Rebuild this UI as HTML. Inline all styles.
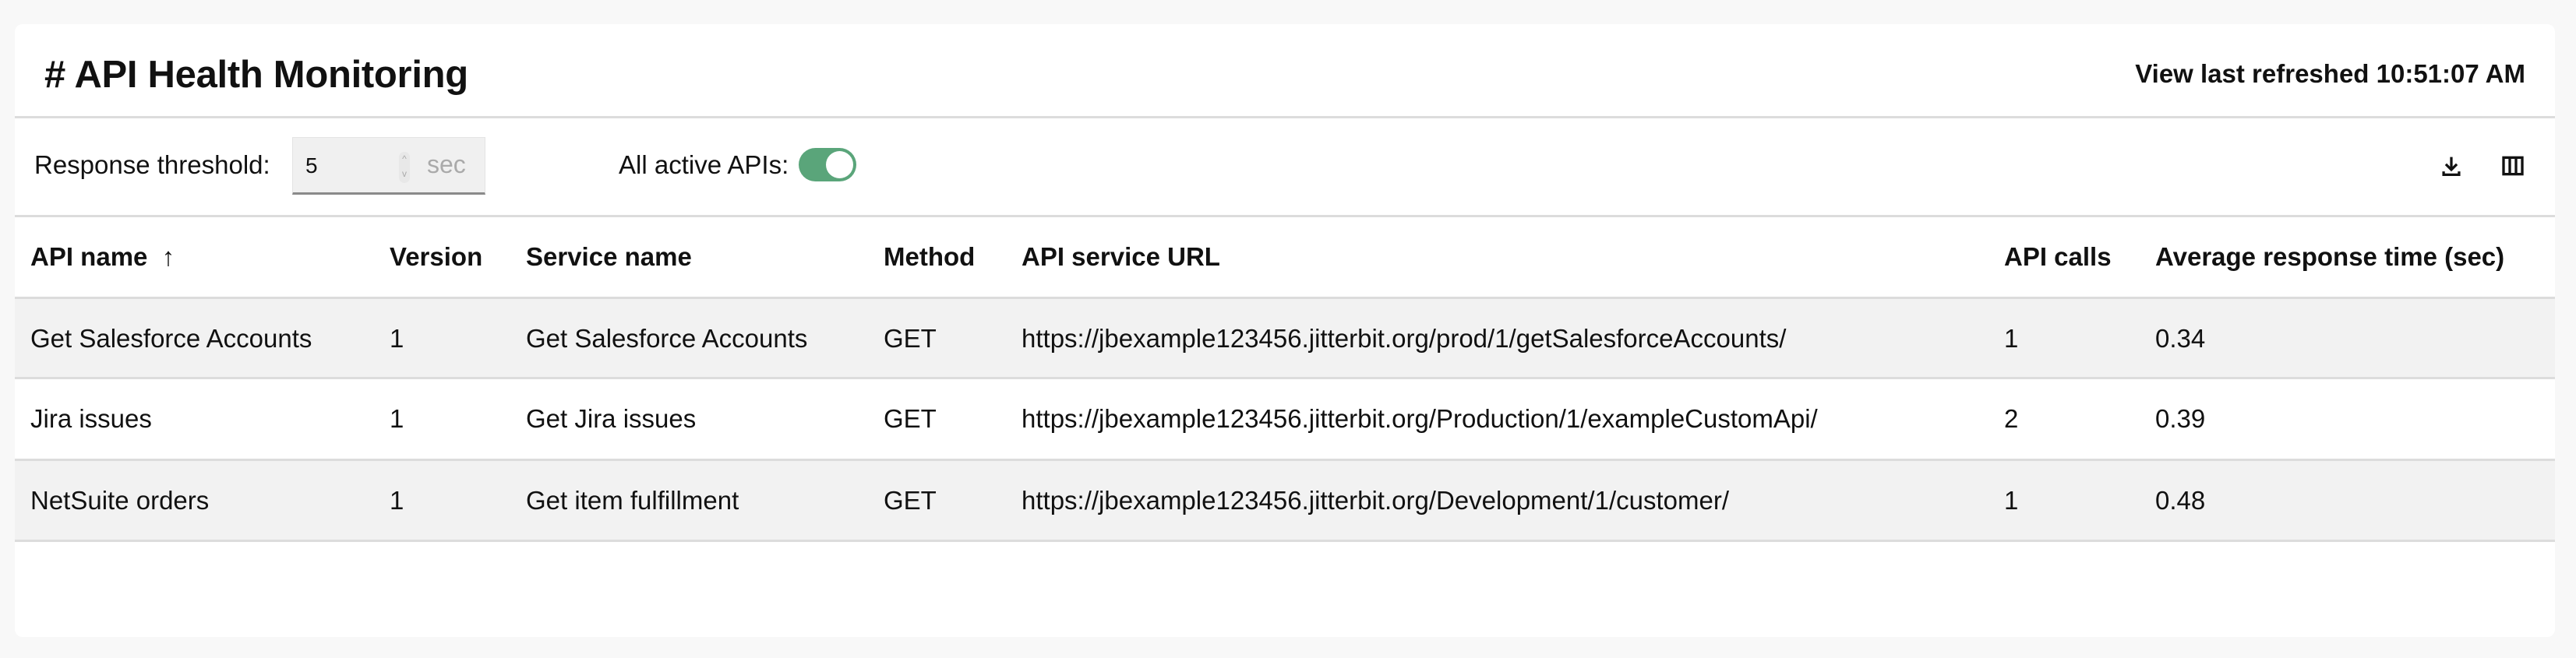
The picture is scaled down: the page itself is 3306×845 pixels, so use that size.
<!DOCTYPE html>
<html><head><meta charset="utf-8"><style>
*{margin:0;padding:0;box-sizing:border-box}
body{width:3306px;height:845px;background:#f8f8f8;font-family:"Liberation Sans",sans-serif;color:#111;position:relative;overflow:hidden}
.card{position:absolute;left:19px;top:31px;width:3260px;height:787px;background:#fff;border-radius:10px}
.abs{position:absolute;white-space:nowrap}
.title{left:38px;top:37px;font-size:49px;font-weight:bold;letter-spacing:-0.3px}
.refr{right:38px;top:45px;font-size:33px;font-weight:bold}
.hr{position:absolute;left:0;right:0;height:3px;background:#dcdcdc}
.lbl{font-size:33px;top:162px}
.inp{left:356px;top:145px;width:248px;height:74px;background:#f0f0f0;border:1px solid #e4e4e4;border-bottom:3px solid #8a8a8a}
.tog{left:1006px;top:159px;width:74px;height:43px;background:#5aa57a;border-radius:22px}
.tog:after{content:"";position:absolute;right:4px;top:4px;width:35px;height:35px;border-radius:50%;background:#fff}
.row{position:absolute;left:0;right:0;height:104px}
.c{position:absolute;font-size:33px;white-space:nowrap}
.h .c{font-weight:bold}
</style></head><body>
<div class="card">
<div class="abs title"># API Health Monitoring</div>
<div class="abs refr">View last refreshed 10:51:07 AM</div>
<div class="hr" style="top:118px"></div>
<div class="abs lbl" style="left:25px">Response threshold:</div>
<div class="abs inp"><span style="position:absolute;left:16px;top:20px;font-size:28px">5</span>
<span style="position:absolute;left:136px;top:18px;width:14px;height:40px;border-radius:7px;background:#e8e8e8;font-size:12px;color:#aaa;text-align:center;line-height:19px">^<br>v</span>
<span style="position:absolute;left:172px;top:16px;font-size:32px;color:#aaa">sec</span></div>
<div class="abs lbl" style="left:775px">All active APIs:</div>
<div class="abs tog"></div>
<svg class="abs" style="left:3110px;top:165px" width="34" height="34" viewBox="0 0 24 24"><path d="M12 4v11M7 10.5l5 5 5-5M5 17v3h14v-3" fill="none" stroke="#111" stroke-width="2.3"/></svg>
<svg class="abs" style="left:3189px;top:166px" width="34" height="32" viewBox="0 0 24 24"><rect x="3" y="4" width="18" height="16" fill="none" stroke="#111" stroke-width="2.5"/><path d="M9 4v16M15 4v16" stroke="#111" stroke-width="2.5"/></svg>
<div class="hr" style="top:245px"></div>
<div class="row h" style="top:250px;height:101px">
<div class="c" style="left:20px;top:30px">API name &nbsp;↑</div>
<div class="c" style="left:481px;top:30px">Version</div>
<div class="c" style="left:656px;top:30px">Service name</div>
<div class="c" style="left:1115px;top:30px">Method</div>
<div class="c" style="left:1292px;top:30px">API service URL</div>
<div class="c" style="left:2553px;top:30px">API calls</div>
<div class="c" style="left:2747px;top:30px">Average response time (sec)</div>
</div>
<div class="hr" style="top:350px;background:#dcdcdc"></div>
<div class="row" style="top:353px;background:#f2f2f2;height:101px">
<div class="c" style="left:20px;top:32px">Get Salesforce Accounts</div><div class="c" style="left:481px;top:32px">1</div><div class="c" style="left:656px;top:32px">Get Salesforce Accounts</div><div class="c" style="left:1115px;top:32px">GET</div><div class="c" style="left:1292px;top:32px">https://jbexample123456.jitterbit.org/prod/1/getSalesforceAccounts/</div><div class="c" style="left:2553px;top:32px">1</div><div class="c" style="left:2747px;top:32px">0.34</div></div>
<div class="hr" style="top:453px"></div>
<div class="row" style="top:456px;height:102px">
<div class="c" style="left:20px;top:32px">Jira issues</div><div class="c" style="left:481px;top:32px">1</div><div class="c" style="left:656px;top:32px">Get Jira issues</div><div class="c" style="left:1115px;top:32px">GET</div><div class="c" style="left:1292px;top:32px">https://jbexample123456.jitterbit.org/Production/1/exampleCustomApi/</div><div class="c" style="left:2553px;top:32px">2</div><div class="c" style="left:2747px;top:32px">0.39</div></div>
<div class="hr" style="top:558px"></div>
<div class="row" style="top:561px;background:#f2f2f2;height:101px">
<div class="c" style="left:20px;top:32px">NetSuite orders</div><div class="c" style="left:481px;top:32px">1</div><div class="c" style="left:656px;top:32px">Get item fulfillment</div><div class="c" style="left:1115px;top:32px">GET</div><div class="c" style="left:1292px;top:32px">https://jbexample123456.jitterbit.org/Development/1/customer/</div><div class="c" style="left:2553px;top:32px">1</div><div class="c" style="left:2747px;top:32px">0.48</div></div>
<div class="hr" style="top:662px"></div>
</div>
</body></html>
